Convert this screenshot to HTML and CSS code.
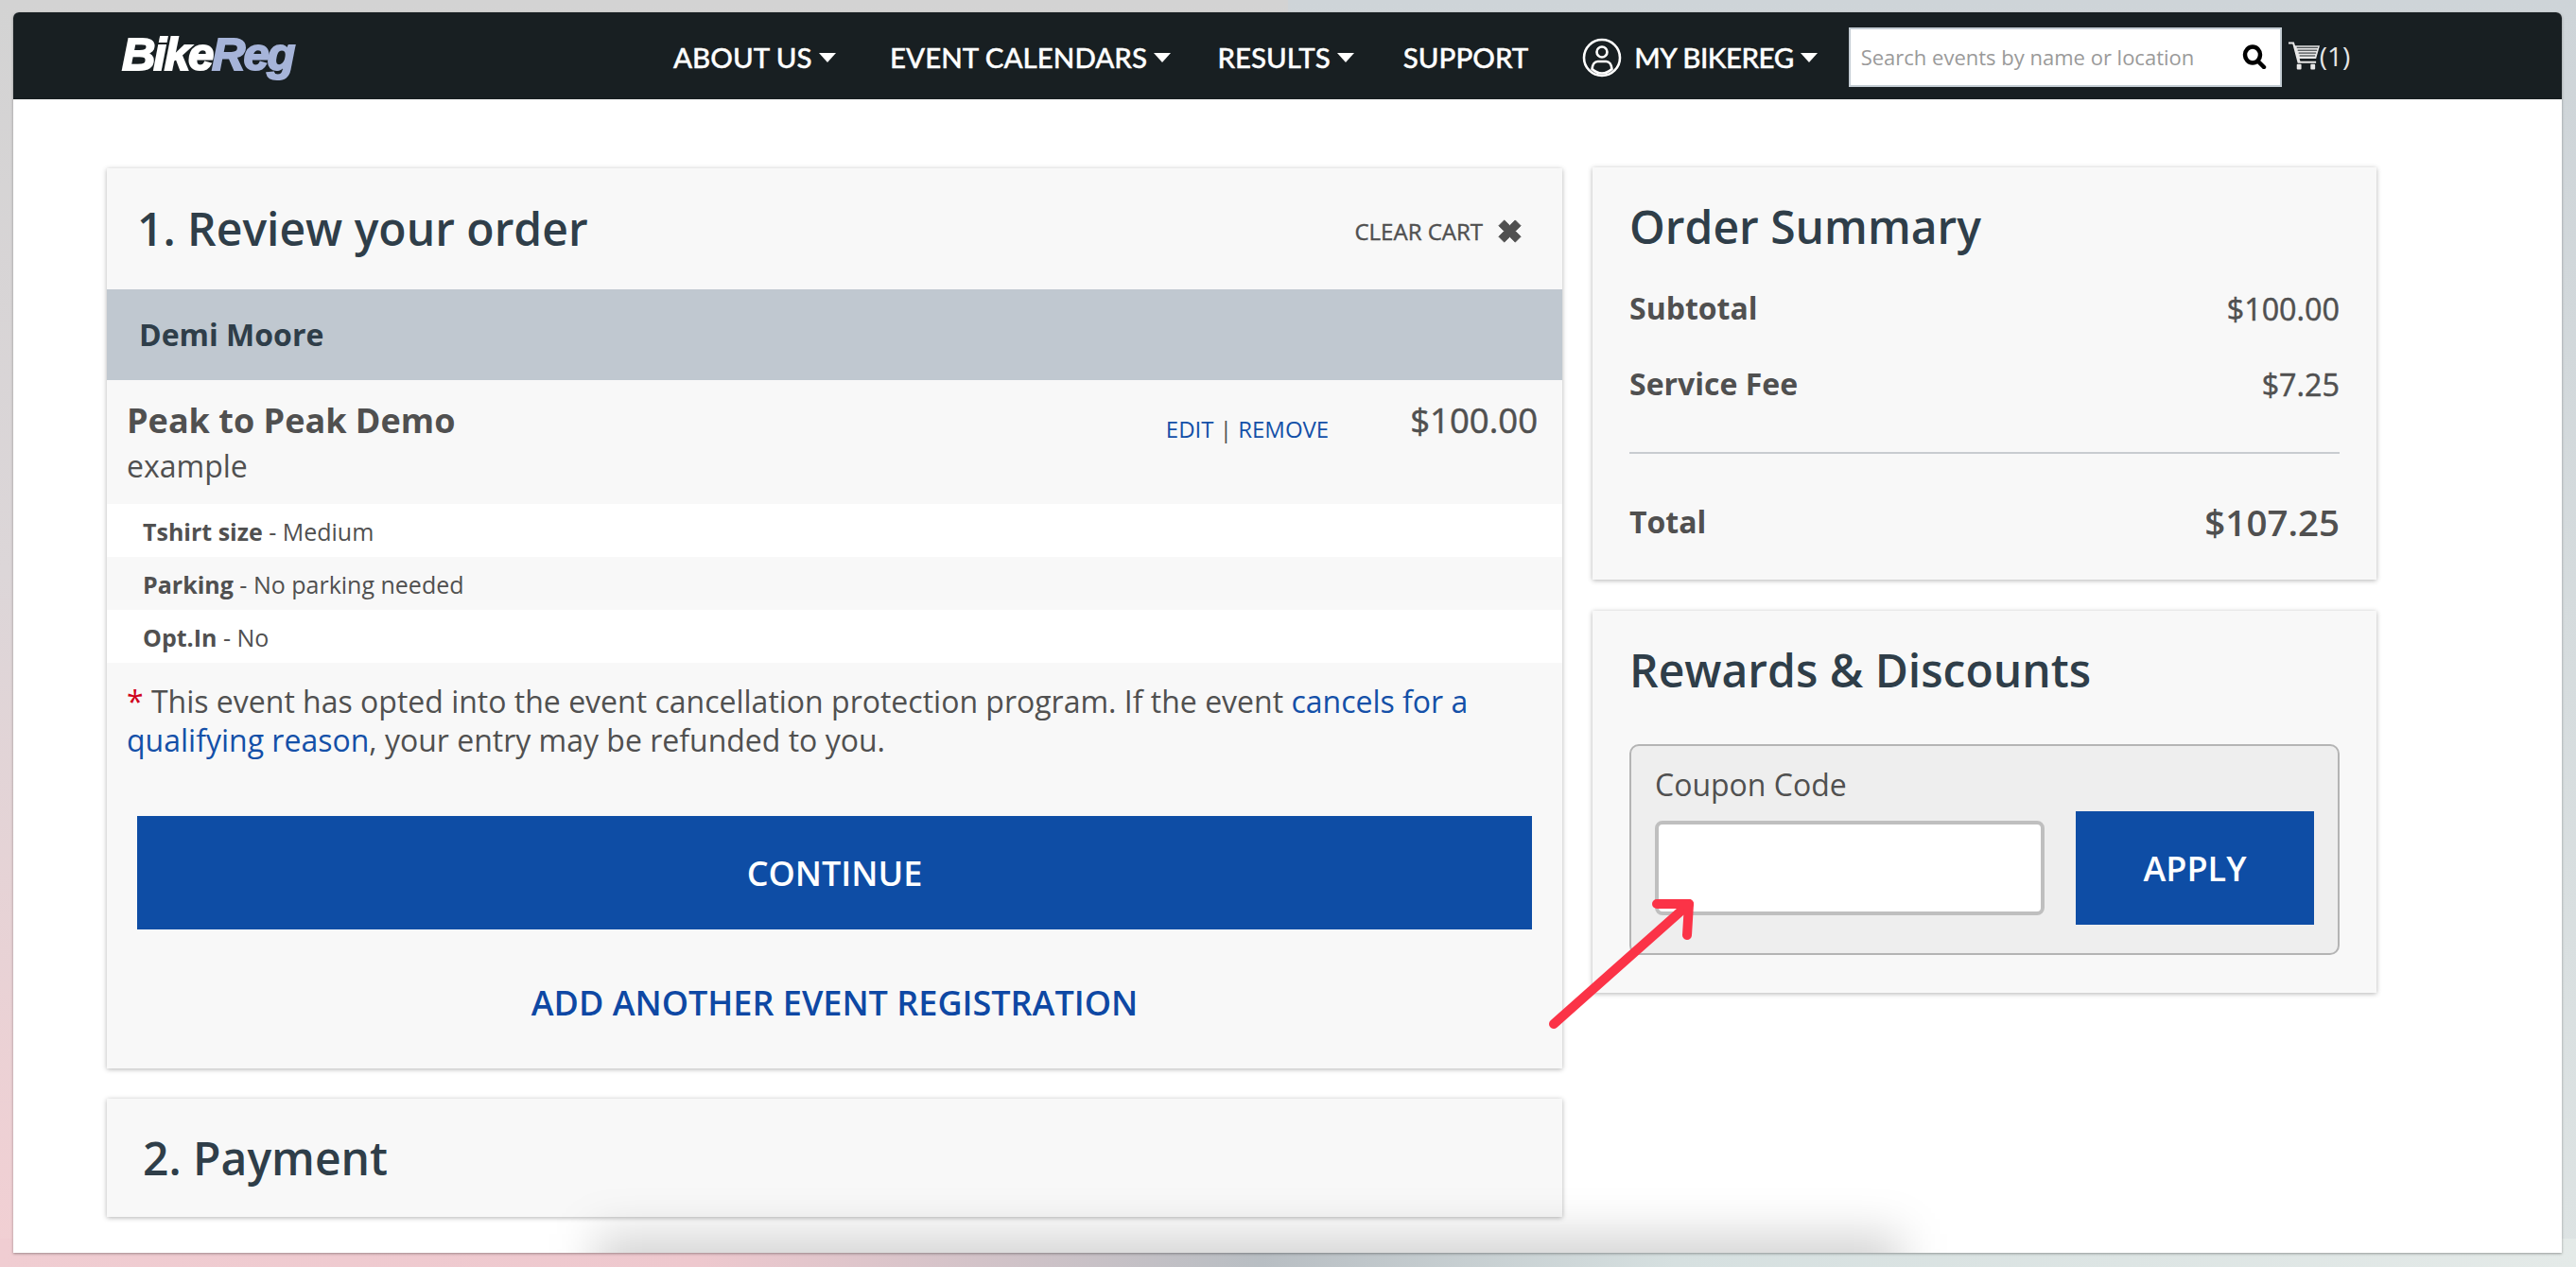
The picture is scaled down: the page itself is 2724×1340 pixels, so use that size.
FILE: index.html
```html
<!DOCTYPE html>
<html lang="en">
<head>
<meta charset="utf-8">
<title>BikeReg Checkout</title>
<link rel="stylesheet" href="styles.css">
</head>
<body>
<div class="window">
  <header class="navbar">
    <a class="logo"><span class="logo-a">Bike</span><span class="logo-b">Reg</span></a>
    <nav class="nav">
      <a class="nav-item n1">ABOUT US<i class="caret"></i></a>
      <a class="nav-item n2">EVENT CALENDARS<i class="caret"></i></a>
      <a class="nav-item n3">RESULTS<i class="caret"></i></a>
      <a class="nav-item n4">SUPPORT</a>
      <a class="nav-item n5">
        <svg class="user-icon" viewBox="0 0 42 42" fill="none" stroke="#fff" stroke-width="2.6"><circle cx="21" cy="21" r="19"/><circle cx="21" cy="15" r="5.500"/><path d="M10.500 33c.5-5 3-8 6-8h9c3 0 5.500 3 6 8-3 2.800-6.800 4.500-10.500 4.500S13.500 35.800 10.500 33z"/></svg>
        MY BIKEREG<i class="caret"></i></a>
    </nav>
    <div class="search">
      <input class="search-input" type="text" placeholder="Search events by name or location">
      <svg class="search-icon" viewBox="0 0 26 26" fill="none" stroke="#000" stroke-width="4.500"><ellipse cx="11" cy="11" rx="8" ry="8.500"/><path d="M17 18l6 6" stroke-linecap="round"/></svg>
    </div>
    <a class="cart">
      <svg class="cart-icon" viewBox="0 0 34 30" fill="#e8e8e8"><path d="M0 0h6l1.200 4H34l-4 14H12l.8 3H30v2H10L4.500 2H0z"/><path d="M9 6h23M10 9h21M11 12h19M12 15h17" stroke="#181f22" stroke-width="1"/><rect x="9" y="24" width="5" height="6" rx="1"/><rect x="24" y="24" width="5" height="6" rx="1"/></svg>(1)</a>
  </header>

  <main class="content">
    <section class="col-left">
      <div class="card card-review">
        <div class="review-head">
          <h2 class="title">1. Review your order</h2>
          <a class="clear">CLEAR CART
            <svg class="clear-x" viewBox="0 0 28 28"><path d="M2 8l6-6 6 6 6-6 6 6-6 6 6 6-6 6-6-6-6 6-6-6 6-6z" fill="#505050" stroke="#505050" stroke-linejoin="round" stroke-width="1"/></svg></a>
        </div>
        <div class="person">Demi Moore</div>
        <div class="item">
          <div class="item-text">
            <div class="item-name">Peak to Peak Demo</div>
            <div class="item-sub">example</div>
          </div>
          <div class="item-links"><a class="link">EDIT</a> | <a class="link">REMOVE</a></div>
          <div class="item-price">$100.00</div>
        </div>
        <div class="opt opt-w"><b>Tshirt size</b> - Medium</div>
        <div class="opt"><b>Parking</b> - No parking needed</div>
        <div class="opt opt-w"><b>Opt.In</b> - No</div>
        <p class="note"><span class="star">*</span> This event has opted into the event cancellation protection program. If the event <a class="link">cancels for a qualifying reason</a>, your entry may be refunded to you.</p>
        <a class="btn btn-continue">CONTINUE</a>
        <a class="add-link">ADD ANOTHER EVENT REGISTRATION</a>
      </div>
      <div class="card card-payment">
        <h2 class="title">2. Payment</h2>
      </div>
    </section>

    <aside class="col-right">
      <div class="card card-summary">
        <h2 class="title">Order Summary</h2>
        <div class="sum-row r-sub"><b>Subtotal</b><span>$100.00</span></div>
        <div class="sum-row r-fee"><b>Service Fee</b><span>$7.25</span></div>
        <div class="sum-rule"></div>
        <div class="sum-row r-total"><b>Total</b><span class="total-val">$107.25</span></div>
      </div>
      <div class="card card-rewards">
        <h2 class="title">Rewards &amp; Discounts</h2>
        <div class="coupon">
          <div class="coupon-field">
            <label class="coupon-label">Coupon Code</label>
            <input class="coupon-input" type="text">
          </div>
          <a class="btn btn-apply">APPLY</a>
        </div>
      </div>
    </aside>
  </main>

  <div class="blob"></div>
  <svg class="arrow" viewBox="0 0 170 160" fill="none" stroke="#fb3347" stroke-width="10" stroke-linecap="round" stroke-linejoin="round"><path d="M7 135 150 8"/><path d="M116 8l34 0-2 33"/></svg>
</div>
</body>
</html>
```
FILE: styles.css
```css
* { box-sizing: border-box; }
html, body { height: 100%; }
body {
  margin: 0;
  height: 1340px;
  overflow: hidden;
  padding: 13px 15px 15px 14px;
  font-family: "Open Sans", "Liberation Sans", sans-serif;
  color: #505050;
  background:
    linear-gradient(90deg, rgba(240,205,210,1) 0%, rgba(238,200,206,1) 27%, rgba(184,190,195,1) 49%, rgba(214,224,224,1) 65%, rgba(228,234,232,1) 100%) bottom / 100% 30px no-repeat,
    linear-gradient(180deg, #d3d3d3 0%, #dcd6d8 45%, #f2cfd3 100%) left / 50% 100% no-repeat,
    linear-gradient(180deg, #ced4d8 0%, #dde3e3 100%);
}
a { text-decoration: none; color: inherit; }
h2 { margin: 0; font-weight: 600; }

.window {
  position: relative;
  height: 1312px;
  background: #fff;
  border-radius: 6px 6px 0 0;
  overflow: hidden;
  box-shadow: 0 1px 3px rgba(0,0,0,.35);
}

/* navbar */
.navbar {
  height: 92px;
  background: #181f22;
  display: flex;
  align-items: center;
  padding-left: 115px;
  color: #fff;
}
.logo {
  width: 185px;
  font: italic 700 49px/1 "Liberation Sans", sans-serif;
  letter-spacing: -2.100px;
  -webkit-text-stroke: 2px currentColor;
  margin-top: -3px;
}
.logo-a { color: #fff; }
.logo-b { color: #a6b4d9; }
.nav {
  display: flex;
  align-items: center;
  margin-left: 398px;
  margin-top: 3px;
  font: 500 29.500px/1 Lato, sans-serif;
  -webkit-text-stroke: .4px #fff;
  white-space: nowrap;
}
.nav-item { display: flex; align-items: center; }
.n2 { margin-left: 57.500px; }
.n3 { margin-left: 49.400px; }
.n4 { margin-left: 52px; }
.n5 { margin-left: 57px; letter-spacing: -.5px; }
.caret {
  display: inline-block;
  width: 0;
  height: 0;
  margin-left: 7px;
  border-left: 9px solid transparent;
  border-right: 9px solid transparent;
  border-top: 10px solid #fff;
}
.user-icon { width: 42px; height: 42px; margin-right: 13px; }
.search {
  margin-left: 33px;
  width: 458px;
  height: 63px;
  margin-top: 2px;
  background: #fff;
  border: 2px solid #c3ccd3;
  display: flex;
  align-items: center;
  padding: 0 14px 0 11px;
}
.search-input {
  flex: 1;
  min-width: 0;
  border: 0;
  outline: 0;
  padding: 0;
  background: transparent;
  font: 400 22px "Open Sans", sans-serif;
}
.search-input::placeholder { color: #9a9a9a; opacity: 1; }
.search-icon { width: 26px; height: 26px; }
.cart {
  margin-left: 7px;
  display: flex;
  align-items: center;
  font: 400 28px/1 "Open Sans", sans-serif;
  color: #e6e6e6;
}
.cart-icon { width: 33px; height: 30px; }

/* content */
.content {
  display: flex;
  align-items: flex-start;
  gap: 32px;
  padding: 73px 0 0 99px;
}
.col-left { width: 1539px; }
.col-right { width: 829px; margin-top: -1px; }
.card {
  background: #f8f8f8;
  box-shadow: 0 1px 5px rgba(0,0,0,.3);
}
.title { font-size: 48px; line-height: 62px; color: #2f3e49; }

.card-review { height: 952px; }
.review-head {
  height: 128px;
  display: flex;
  align-items: center;
  justify-content: space-between;
  padding: 0 42px 1px 32px;
}
.clear {
  display: flex;
  align-items: center;
  gap: 15px;
  font-size: 24px;
  -webkit-text-stroke: .4px #505050;
  margin-top: 5px;
}
.clear-x { width: 27px; height: 27px; }
.person {
  height: 96px;
  background: #c0c8d0;
  color: #2f3e49;
  font-size: 32px;
  font-weight: 700;
  line-height: 96px;
  padding-left: 34px;
}
.item {
  height: 131px;
  display: flex;
  padding: 17px 26px 0 21px;
}
.item-text { flex: 1; }
.item-name { font-size: 36px; font-weight: 700; line-height: 52px; }
.item-sub { font-size: 32px; font-weight: 400; line-height: 43px; }
.item-links { font-size: 24px; line-height: 34px; margin: 18px 86px 0 0; }
.item-price { font-size: 36.500px; line-height: 50px; -webkit-text-stroke: .5px #505050; }
.link { color: #1450a8; }
.opt {
  height: 56px;
  line-height: 58px;
  padding-left: 38px;
  font-size: 25px;
}
.opt-w { background: #fff; }
.note {
  margin: 0;
  padding: 20px 40px 0 21px;
  font-size: 32px;
  line-height: 41px;
}
.star { color: #d0021b; }
.btn {
  display: flex;
  align-items: center;
  justify-content: center;
  background: #0e4da5;
  color: #fff;
  font-weight: 600;
}
.btn-continue {
  height: 120px;
  margin: 60px 32px 0;
  font-size: 36px;
}
.add-link {
  display: block;
  margin-top: 50px;
  text-align: center;
  color: #0e48a4;
  font-size: 36px;
  font-weight: 600;
  line-height: 56px;
}
.card-payment {
  margin-top: 32px;
  height: 125px;
  padding: 32px 0 0 38px;
}

.card-summary {
  height: 436px;
  padding: 32px 39px 0 39px;
}
.sum-row {
  display: flex;
  justify-content: space-between;
  align-items: center;
  font-size: 32px;
  line-height: 46px;
}
.sum-row span { font-size: 32.300px; -webkit-text-stroke: .5px #505050; }
.r-sub { margin-top: 32px; }
.r-fee { margin-top: 34px; }
.sum-rule { height: 2px; background: #c8ccd0; margin-top: 49px; }
.r-total { margin-top: 49px; }
.sum-row .total-val { font-size: 38.500px; font-weight: 600; -webkit-text-stroke: 0; }
.card-rewards {
  margin-top: 33px;
  height: 404px;
  padding: 32px 39px 0 39px;
}
.coupon {
  margin-top: 47px;
  height: 223px;
  background: #eee;
  border: 2px solid #b4b4b4;
  border-radius: 10px;
  display: flex;
  padding: 19px 25px 0 25px;
  gap: 33px;
}
.coupon-field { width: 412px; }
.coupon-label { display: block; font-size: 32px; line-height: 44px; }
.coupon-input {
  display: block;
  width: 412px;
  height: 100px;
  margin-top: 16px;
  background: #fff;
  border: 4px solid #bfbfbf;
  border-radius: 8px;
  outline: 0;
}
.btn-apply {
  width: 252px;
  height: 120px;
  margin-top: 50px;
  font-size: 36px;
}

/* overlays */
.blob {
  position: absolute;
  left: 616px;
  top: 1292px;
  width: 1380px;
  height: 100px;
  background: rgba(0,0,0,.17);
  filter: blur(24px);
  pointer-events: none;
}
.arrow {
  position: absolute;
  left: 1622px;
  top: 935px;
  width: 170px;
  height: 160px;
}
```
